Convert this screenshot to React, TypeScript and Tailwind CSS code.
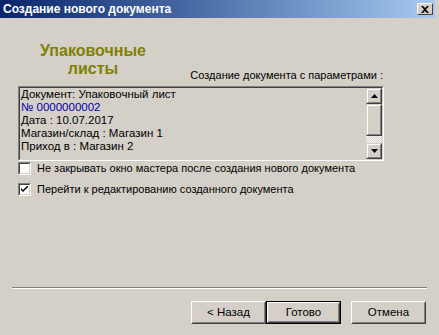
import React from "react";

const raised =
  "border border-t-white border-l-white border-r-[#404040] border-b-[#404040]";

function ScrollBtn({ down }: { down?: boolean }) {
  return (
    <div className="w-[16px] h-[16px] bg-[#d4d0c8] border border-t-[#d4d0c8] border-l-[#d4d0c8] border-r-[#404040] border-b-[#404040]">
      <div className="w-full h-full flex items-center justify-center border border-t-white border-l-white border-r-[#808080] border-b-[#808080]">
        <svg width="7" height="4" viewBox="0 0 7 4">
          {down ? (
            <polygon points="0,0 7,0 3.5,4" fill="#000" />
          ) : (
            <polygon points="3.5,0 7,4 0,4" fill="#000" />
          )}
        </svg>
      </div>
    </div>
  );
}

function Checkbox({ checked, label }: { checked?: boolean; label: string }) {
  return (
    <div className="flex items-center h-[13px]">
      <div className="w-[13px] h-[13px] shrink-0 bg-white border border-t-[#808080] border-l-[#808080] border-r-white border-b-white">
        <div className="w-full h-full border border-t-[#404040] border-l-[#404040] border-r-[#d4d0c8] border-b-[#d4d0c8] flex items-center justify-center">
          {checked && (
            <svg width="7" height="7" viewBox="0 0 7 7">
              <path d="M0 2 L0 4 L2 6 L7 1 L7 -1 L2 4 Z" fill="#000" />
            </svg>
          )}
        </div>
      </div>
      <span className="ml-[6px] whitespace-nowrap text-[11px] leading-[13px] text-black">{label}</span>
    </div>
  );
}

function Button({ label, isDefault }: { label: string; isDefault?: boolean }) {
  return (
    <div
      className={
        "w-[75px] h-[23px] bg-[#d4d0c8] " +
        (isDefault ? "border border-black" : "")
      }
    >
      <div className={"w-full h-full border border-t-white border-l-white border-r-[#404040] border-b-[#404040]"}>
        <div className="w-full h-full flex items-center justify-center border border-t-[#d4d0c8] border-l-[#d4d0c8] border-r-[#808080] border-b-[#808080] text-[11.5px] text-black">
          {label}
        </div>
      </div>
    </div>
  );
}

export default function App() {
  return (
    <div
      className="w-[439px] h-[335px] bg-[#d4d0c8] overflow-hidden flex flex-col"
      style={{ fontFamily: '"Liberation Sans", Arial, sans-serif' }}
    >
      {/* title bar */}
      <div className="w-[435px] h-[18px] flex items-center justify-between pl-[3px] pr-[2px] bg-gradient-to-r from-[#0a246a] to-[#a6caf0]">
        <span className="text-white font-bold text-[12px] leading-[18px]">
          Создание нового документа
        </span>
        <div className={"w-[16px] h-[12px] bg-[#d4d0c8] flex items-center justify-center " + raised}>
          <svg width="8" height="7" viewBox="0 0 8 7">
            <path d="M0 0 L2 0 L4 2 L6 0 L8 0 L5 3.5 L8 7 L6 7 L4 5 L2 7 L0 7 L3 3.5 Z" fill="#000" />
          </svg>
        </div>
      </div>

      {/* content */}
      <div className="pl-[18px] pr-[55px] flex flex-col">
        <div className="flex items-start justify-between">
          <div className="w-[150px] mt-[24px] text-center text-[#808000] font-bold text-[16px] leading-[18px]">
            Упаковочные
            <br />
            листы
          </div>
          <div className="mt-[50px] text-[11px] leading-[14px] text-black pr-[1px] whitespace-nowrap">
            Создание документа с параметрами :
          </div>
        </div>

        <div className="mt-[4px] w-[366px] h-[75px] border border-t-[#808080] border-l-[#808080] border-r-white border-b-white">
          <div className="w-full h-full flex border border-t-[#404040] border-l-[#404040] border-r-[#d4d0c8] border-b-[#d4d0c8]">
            <div className="flex-1 pl-[1px] text-[11.5px] leading-[13px] text-black">
              <div>Документ: Упаковочный лист</div>
              <div className="text-[#0000a8]">№ 0000000002</div>
              <div>Дата : 10.07.2017</div>
              <div>Магазин/склад : Магазин 1</div>
              <div>Приход в : Магазин 2</div>
            </div>
            <div className="w-[16px] flex flex-col">
              <ScrollBtn />
              <div className={"w-[16px] h-[32px] bg-[#d4d0c8] border border-t-[#d4d0c8] border-l-[#d4d0c8] border-r-[#404040] border-b-[#404040]"}>
                <div className="w-full h-full border border-t-white border-l-white border-r-[#808080] border-b-[#808080]" />
              </div>
              <div className="flex-1 bg-[repeating-conic-gradient(#ffffff_0_25%,#d4d0c8_0_50%)] bg-[length:2px_2px]" />
              <ScrollBtn down />
            </div>
          </div>
        </div>

        <div className="mt-[1px] flex flex-col gap-[8px]">
          <Checkbox label="Не закрывать окно мастера после создания нового документа" />
          <Checkbox checked label="Перейти к редактированию созданного документа" />
        </div>
      </div>

      <div className="mt-[91px] ml-[12px] w-[415px] border-t border-t-[#808080] border-b border-b-white" />

      <div className="mt-[12px] flex pl-[191px]">
        <Button label="< Назад" />
        <Button label="Готово" isDefault />
        <div className="w-[10px]" />
        <Button label="Отмена" />
      </div>
    </div>
  );
}
